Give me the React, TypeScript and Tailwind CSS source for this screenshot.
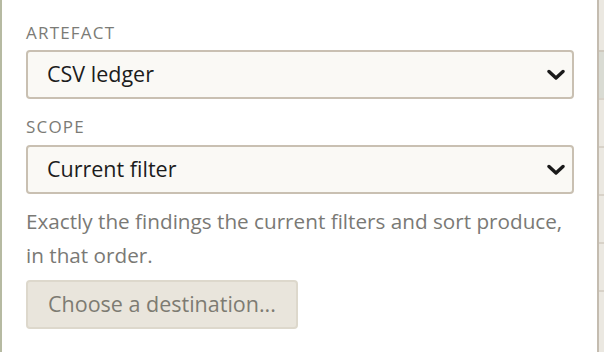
import React from "react";

function Chevron() {
  return (
    <svg width="18" height="12" viewBox="0 0 18 12" className="shrink-0">
      <path d="M2 2.5 L9 9 L16 2.5" fill="none" stroke="#1a1a1a" strokeWidth="3.4" strokeLinecap="round" strokeLinejoin="round" />
    </svg>
  );
}

function Select({ value }: { value: string }) {
  return (
    <div className="flex h-[49px] w-full items-center justify-between rounded-[4px] border-2 border-[#c9c0b2] bg-[#faf9f5] pl-[19px] pr-[7px]">
      <span className="text-[21.5px] text-[#1c1c1c]">{value}</span>
      <Chevron />
    </div>
  );
}

export default function App() {
  const rows = [0, 1, 2, 3, 4];
  return (
    <div className="flex h-[352px] w-[604px] overflow-hidden bg-white" style={{ fontFamily: '"Open Sans", "Noto Sans", sans-serif' }}>
      <div className="flex flex-1 flex-col border-l-2 border-r-2 border-l-[#b6baa2] border-r-[#c4bcb0] bg-white pl-[24px] pr-[23px]">
        <div className="mt-[21px] text-[17px] leading-[24px] tracking-[1.2px] text-[#7b7b76]">ARTEFACT</div>
        <div className="mt-[5px]">
          <Select value="CSV ledger" />
        </div>
        <div className="mt-[16px] text-[17px] leading-[24px] tracking-[1.2px] text-[#7b7b76]">SCOPE</div>
        <div className="mt-[6px]">
          <Select value="Current filter" />
        </div>
        <p className="mt-[10px] text-[20.7px] leading-[34px] text-[#7a7975]">
          Exactly the findings the current filters and sort produce, in that order.
        </p>
        <div className="mt-[8px]">
          <button className="flex h-[49px] items-center rounded-[4px] border-2 border-[#ddd8cc] bg-[#e9e5dc] px-[20px] text-[21.5px] text-[#7d7b72]">
            Choose a destination...
          </button>
        </div>
      </div>
      <div className="flex w-[5px] flex-col bg-[#ebe8e1]">
        <div className="h-[50px]" />
        <div className="h-[48px] border-t-2 border-[#cfc9be] bg-[#d9dbd3]" />
        {rows.map((r) => (
          <div key={r} className="h-[48px] border-t-2 border-[#d8d2c8]" />
        ))}
      </div>
    </div>
  );
}
